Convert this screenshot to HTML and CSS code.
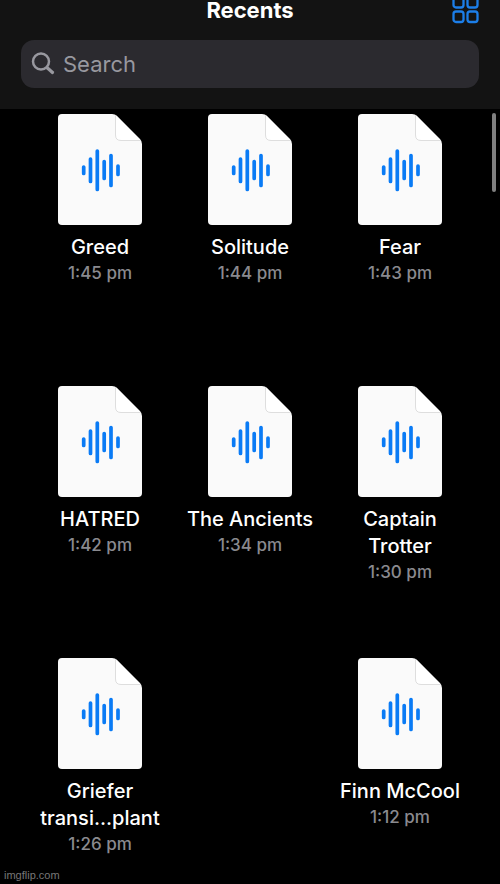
FILE: index.html
```html
<!DOCTYPE html>
<html lang="en">
<head>
<meta charset="utf-8">
<meta name="viewport" content="width=device-width, initial-scale=1">
<title>Recents</title>
<link rel="stylesheet" href="styles.css">
</head>
<body>
<svg class="defs" aria-hidden="true">
  <symbol id="audio-file" viewBox="0 0 84 111">
    <path fill="#fafafa" d="M4 0H54Q57 0 59 2L82 25Q84 27 84 30V107Q84 111 80 111H4Q0 111 0 107V4Q0 0 4 0Z"/>
    <path fill="#fff" d="M57.500 0.800L82.500 26.500H63Q57.500 26.500 57.500 21Z"/>
    <path fill="none" stroke="#dedede" d="M57.500 1V21Q57.500 26.500 63 26.500H83"/>
    <path fill="none" stroke="#0a7bf5" stroke-width="3.700" stroke-linecap="round" d="M25.700 53V59.500M32.500 45V67.500M39.300 37V75.500M46.200 47.500V64.500M53 41.500V71.500M60 52V60.500"/>
  </symbol>
</svg>
<header class="header">
  <div class="titlebar">
    <h1 class="title">Recents</h1>
    <button class="view-button" type="button" aria-label="Grid view">
      <svg viewBox="0 0 28 28" width="28" height="28" fill="none" stroke="#1c7ee8" stroke-width="2.300">
        <rect x="2.500" y="1.500" width="10" height="10" rx="2.500"/>
        <rect x="16.500" y="1.500" width="10" height="10" rx="2.500"/>
        <rect x="2.500" y="15.500" width="10" height="10.500" rx="2.500"/>
        <rect x="16.500" y="15.500" width="10" height="10.500" rx="2.500"/>
      </svg>
    </button>
  </div>
  <label class="search">
    <svg viewBox="0 0 24 24" width="24" height="24" fill="none" stroke="#98989f" stroke-linecap="round">
      <circle cx="10" cy="9.500" r="8" stroke-width="2.500"/>
      <path d="M16.500 16L21.500 20.500" stroke-width="3.200"/>
    </svg>
    <input class="search-input" type="search" placeholder="Search" aria-label="Search">
  </label>
</header>
<main class="files">
  <article class="file"><svg class="file-icon"><use href="#audio-file"/></svg><h2 class="name">Greed</h2><time class="time">1:45 pm</time></article>
  <article class="file"><svg class="file-icon"><use href="#audio-file"/></svg><h2 class="name">Solitude</h2><time class="time">1:44 pm</time></article>
  <article class="file"><svg class="file-icon"><use href="#audio-file"/></svg><h2 class="name">Fear</h2><time class="time">1:43 pm</time></article>
  <article class="file"><svg class="file-icon"><use href="#audio-file"/></svg><h2 class="name">HATRED</h2><time class="time">1:42 pm</time></article>
  <article class="file"><svg class="file-icon"><use href="#audio-file"/></svg><h2 class="name">The Ancients</h2><time class="time">1:34 pm</time></article>
  <article class="file"><svg class="file-icon"><use href="#audio-file"/></svg><h2 class="name">Captain<br>Trotter</h2><time class="time">1:30 pm</time></article>
  <article class="file"><svg class="file-icon"><use href="#audio-file"/></svg><h2 class="name">Griefer<br>transi...plant</h2><time class="time">1:26 pm</time></article>
  <article class="file last-column"><svg class="file-icon"><use href="#audio-file"/></svg><h2 class="name">Finn McCool</h2><time class="time">1:12 pm</time></article>
</main>
<div class="scroll-thumb"></div>
<footer class="watermark">imgflip.com</footer>
</body>
</html>
```
FILE: styles.css
```css
* {
  box-sizing: border-box;
}

body {
  margin: 0;
  min-height: 100vh;
  position: relative;
  background: #000;
  color: #fff;
  font-family: Inter, "Liberation Sans", sans-serif;
}

.defs {
  position: absolute;
  width: 0;
  height: 0;
}

.header {
  padding: 0 21px 21px;
  background: #131313;
}

/* The title bar is partly scrolled out above the window. */
.titlebar {
  display: grid;
  grid-template-columns: 1fr auto 1fr;
  align-items: center;
  height: 60px;
  margin-top: -20px;
}

.title {
  grid-column: 2;
  margin: 0;
  font-size: 22px;
  line-height: 20px;
  font-weight: 700;
}

.view-button {
  justify-self: end;
  display: flex;
  padding: 0;
  border: 0;
  background: none;
}

.search {
  display: flex;
  align-items: center;
  gap: 8px;
  height: 48px;
  padding: 0 10px;
  border-radius: 13px;
  background: #2b2a2f;
}

.search-input {
  flex: 1;
  min-width: 0;
  padding: 0;
  border: 0;
  outline: 0;
  background: none;
  color: #fff;
  font: 400 22px/28px Inter, "Liberation Sans", sans-serif;
}

.search-input::placeholder {
  color: #98989f;
  opacity: 1;
}

.files {
  display: grid;
  grid-template-columns: repeat(3, 1fr);
  grid-template-rows: 272px 272px auto;
  padding: 5px 25px 0;
}

.file {
  display: flex;
  flex-direction: column;
  align-items: center;
  text-align: center;
}

.last-column {
  grid-column: 3;
}

.file-icon {
  width: 84px;
  height: 111px;
  flex: none;
}

.name {
  margin: 9px 0 0;
  font-size: 20px;
  line-height: 27px;
  font-weight: 500;
  white-space: nowrap;
}

.time {
  color: #8a8a8f;
  font-size: 17px;
  line-height: 24px;
  font-weight: 500;
}

.scroll-thumb {
  position: absolute;
  top: 113px;
  right: 4px;
  width: 4px;
  height: 79px;
  border-radius: 2px;
  background: #808080;
}

.watermark {
  position: absolute;
  left: 4px;
  bottom: 2px;
  color: #777;
  font: 11px/14px "Liberation Sans", sans-serif;
}
```
